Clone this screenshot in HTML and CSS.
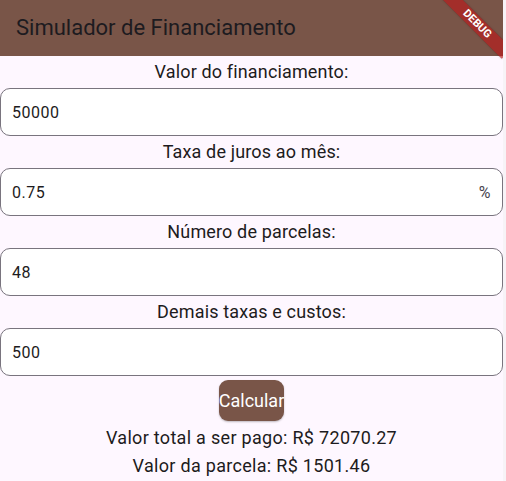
FILE: index.html
```html
<!DOCTYPE html>
<html lang="pt">
<head>
<meta charset="utf-8">
<title>Simulador de Financiamento</title>
<link rel="stylesheet" href="styles.css">
</head>
<body>
<div class="app">
  <header class="appbar">
    <h1 class="title">Simulador de Financiamento</h1>
  </header>
  <main class="content">
    <div class="label">Valor do financiamento:</div>
    <div class="field"><span class="value">50000</span></div>
    <div class="label">Taxa de juros ao mês:</div>
    <div class="field"><span class="value">0.75</span><span class="suffix">%</span></div>
    <div class="label">Número de parcelas:</div>
    <div class="field"><span class="value">48</span></div>
    <div class="label">Demais taxas e custos:</div>
    <div class="field"><span class="value">500</span></div>
    <div class="actions"><button class="btn">Calcular</button></div>
    <div class="result">Valor total a ser pago: R$ 72070.27</div>
    <div class="result">Valor da parcela: R$ 1501.46</div>
  </main>
  <div class="banner"><span>DEBUG</span></div>
</div>
</body>
</html>
```
FILE: styles.css
```css
html, body {
  margin: 0;
  padding: 0;
  background: #f7f3f7;
  font-family: Roboto, "Noto Sans", sans-serif;
  color: #1d1b20;
}
.app {
  width: 503px;
  height: 481px;
  background: #fef7ff;
  overflow: hidden;
  position: relative;
}
.appbar {
  height: 56px;
  background: #795548;
  display: flex;
  align-items: center;
  padding: 0 16px;
}
.title {
  margin: 0;
  font-size: 22px;
  font-weight: 400;
  line-height: 28px;
  color: #1d1b20;
}
.banner {
  position: absolute;
  top: 0;
  right: 0;
  width: 70px;
  height: 70px;
  overflow: hidden;
  pointer-events: none;
}
.banner span {
  position: absolute;
  top: 17px;
  right: -16px;
  width: 84px;
  height: 14px;
  line-height: 14px;
  background: rgba(183, 28, 28, 0.68);
  color: #fff;
  font-size: 11px;
  font-weight: 700;
  text-align: center;
  transform: rotate(45deg);
  box-shadow: 0 0 2px rgba(0,0,0,0.25);
}
.content {
  display: flex;
  flex-direction: column;
}
.label {
  height: 32px;
  line-height: 31px;
  text-align: center;
  font-size: 18px;
  font-weight: 400;
  letter-spacing: 0.15px;
  color: #1d1b20;
}
.field {
  height: 48px;
  box-sizing: border-box;
  border: 1px solid #79747e;
  border-radius: 10px;
  background: #ffffff;
  display: flex;
  align-items: center;
  padding: 0 11px;
  font-size: 16px;
  letter-spacing: 0.5px;
  color: #1d1b20;
}
.value {
  flex: 1;
}
.suffix {
  color: #49454f;
  font-size: 16px;
}
.actions {
  display: flex;
  justify-content: center;
  padding-top: 4px;
}
.btn {
  height: 41px;
  padding: 0;
  border: none;
  border-radius: 9px;
  background: #795548;
  color: #ffffff;
  font-family: Roboto, sans-serif;
  font-size: 18px;
  box-shadow: 0 1px 2px rgba(0,0,0,0.25);
}
.result {
  text-align: center;
  font-size: 18px;
  font-weight: 400;
  letter-spacing: 0.3px;
  line-height: 28px;
  color: #1d1b20;
}
.actions + .result {
  margin-top: 3px;
}
```
